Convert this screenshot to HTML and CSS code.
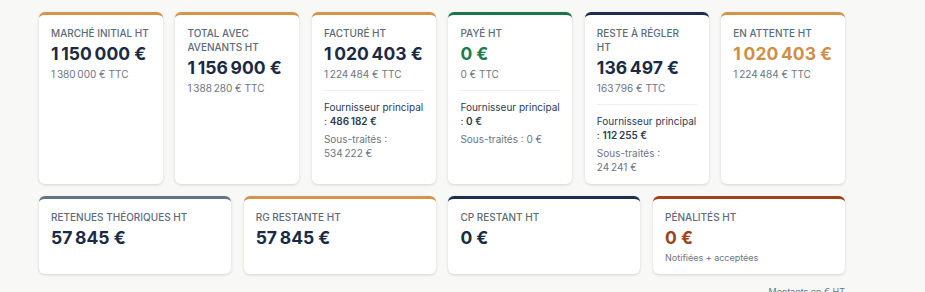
FILE: index.html
```html
<!DOCTYPE html>
<html lang="fr">
<head>
    <meta charset="UTF-8">
    <meta name="viewport" content="width=device-width, initial-scale=1.0">
    <title>Synthèse financière</title>
    <link rel="stylesheet" href="styles.css">
</head>
<body>
    <div class="summary">
        <div class="kpi-grid kpi-grid-6">
            <div class="kpi kpi-orange">
                <div class="kpi-label">Marché initial HT</div>
                <div class="kpi-value">1&#8239;150&#8239;000&nbsp;€</div>
                <div class="kpi-sub">1&#8239;380&#8239;000&nbsp;€ TTC</div>
            </div>
            <div class="kpi kpi-orange">
                <div class="kpi-label">Total avec avenants HT</div>
                <div class="kpi-value">1&#8239;156&#8239;900&nbsp;€</div>
                <div class="kpi-sub">1&#8239;388&#8239;280&nbsp;€ TTC</div>
            </div>
            <div class="kpi kpi-orange">
                <div class="kpi-label">Facturé HT</div>
                <div class="kpi-value">1&#8239;020&#8239;403&nbsp;€</div>
                <div class="kpi-sub">1&#8239;224&#8239;484&nbsp;€ TTC</div>
                <div class="kpi-split">
                    <div class="split-main">Fournisseur principal : <strong>486&#8239;182&nbsp;€</strong></div>
                    <div class="split-sub">Sous-traités : 534&#8239;222&nbsp;€</div>
                </div>
            </div>
            <div class="kpi kpi-green">
                <div class="kpi-label">Payé HT</div>
                <div class="kpi-value">0&nbsp;€</div>
                <div class="kpi-sub">0&nbsp;€ TTC</div>
                <div class="kpi-split">
                    <div class="split-main">Fournisseur principal : <strong>0&nbsp;€</strong></div>
                    <div class="split-sub">Sous-traités : 0&nbsp;€</div>
                </div>
            </div>
            <div class="kpi kpi-navy">
                <div class="kpi-label kpi-label-narrow">Reste à régler HT</div>
                <div class="kpi-value">136&#8239;497&nbsp;€</div>
                <div class="kpi-sub">163&#8239;796&nbsp;€ TTC</div>
                <div class="kpi-split">
                    <div class="split-main">Fournisseur principal : <strong>112&#8239;255&nbsp;€</strong></div>
                    <div class="split-sub">Sous-traités : 24&#8239;241&nbsp;€</div>
                </div>
            </div>
            <div class="kpi kpi-orange kpi-accent">
                <div class="kpi-label">En attente HT</div>
                <div class="kpi-value">1&#8239;020&#8239;403&nbsp;€</div>
                <div class="kpi-sub">1&#8239;224&#8239;484&nbsp;€ TTC</div>
            </div>
        </div>

        <div class="kpi-grid kpi-grid-4">
            <div class="kpi kpi-slate">
                <div class="kpi-label">Retenues théoriques HT</div>
                <div class="kpi-value">57&#8239;845&nbsp;€</div>
            </div>
            <div class="kpi kpi-orange">
                <div class="kpi-label">RG restante HT</div>
                <div class="kpi-value">57&#8239;845&nbsp;€</div>
            </div>
            <div class="kpi kpi-navy">
                <div class="kpi-label">CP restant HT</div>
                <div class="kpi-value">0&nbsp;€</div>
            </div>
            <div class="kpi kpi-rust">
                <div class="kpi-label">Pénalités HT</div>
                <div class="kpi-value">0&nbsp;€</div>
                <div class="kpi-note">Notifiées + acceptées</div>
            </div>
        </div>

        <div class="summary-foot">Montants en € HT</div>
    </div>
</body>
</html>
```

FILE: styles.css
```css
body {
    font-family: Inter, "Noto Sans", Arial, sans-serif;
    margin: 0;
    padding: 0;
    background-color: #f8f8f6;
    color: #1b2a44;
}
.summary {
    width: 806px;
    padding: 12px 0 0 39px;
}
.kpi-grid {
    display: grid;
    gap: 12.8px;
    margin-bottom: 12px;
}
.kpi-grid-6 {
    grid-template-columns: repeat(6, 1fr);
}
.kpi-grid-4 {
    grid-template-columns: repeat(4, 1fr);
}
.kpi {
    background: #ffffff;
    border-radius: 6px;
    border-top: 3px solid #d4944a;
    box-shadow: 0 1px 3px rgba(20, 30, 50, 0.16);
    padding: 11px 12px 10px;
}
.kpi-orange { border-top-color: #d4944a; }
.kpi-green { border-top-color: #17754c; }
.kpi-navy { border-top-color: #1a2d4c; }
.kpi-slate { border-top-color: #5f7489; }
.kpi-rust { border-top-color: #a3421a; }

.kpi-label {
    font-size: 10px;
    line-height: 14px;
    text-transform: uppercase;
    color: #5c6b7c;
    font-weight: 500;
}
.kpi-label-narrow {
    max-width: 92px;
}
.kpi-value {
    font-size: 17.5px;
    line-height: 22px;
    font-weight: 700;
    color: #1b2a44;
    margin-top: 3px;
}
.kpi-green .kpi-value { color: #1f7a4c; }
.kpi-accent .kpi-value { color: #d08f45; }
.kpi-rust .kpi-value { color: #a0421a; }

.kpi-sub {
    font-size: 10px;
    line-height: 14px;
    color: #6b7684;
    margin-top: 2px;
}
.kpi-note {
    font-size: 9px;
    line-height: 12px;
    color: #6b7684;
    margin-top: 3px;
}
.kpi-split {
    border-top: 1px solid #eceef1;
    margin-top: 9px;
    padding-top: 9px;
    font-size: 10px;
    line-height: 14px;
}
.split-main {
    color: #2b3c56;
}
.split-main strong {
    font-weight: 600;
}
.split-sub {
    color: #6b7684;
    margin-top: 4px;
}
.summary-foot {
    text-align: right;
    font-size: 9px;
    line-height: 12px;
    color: #6b7684;
    margin-top: 3px;
}
```
